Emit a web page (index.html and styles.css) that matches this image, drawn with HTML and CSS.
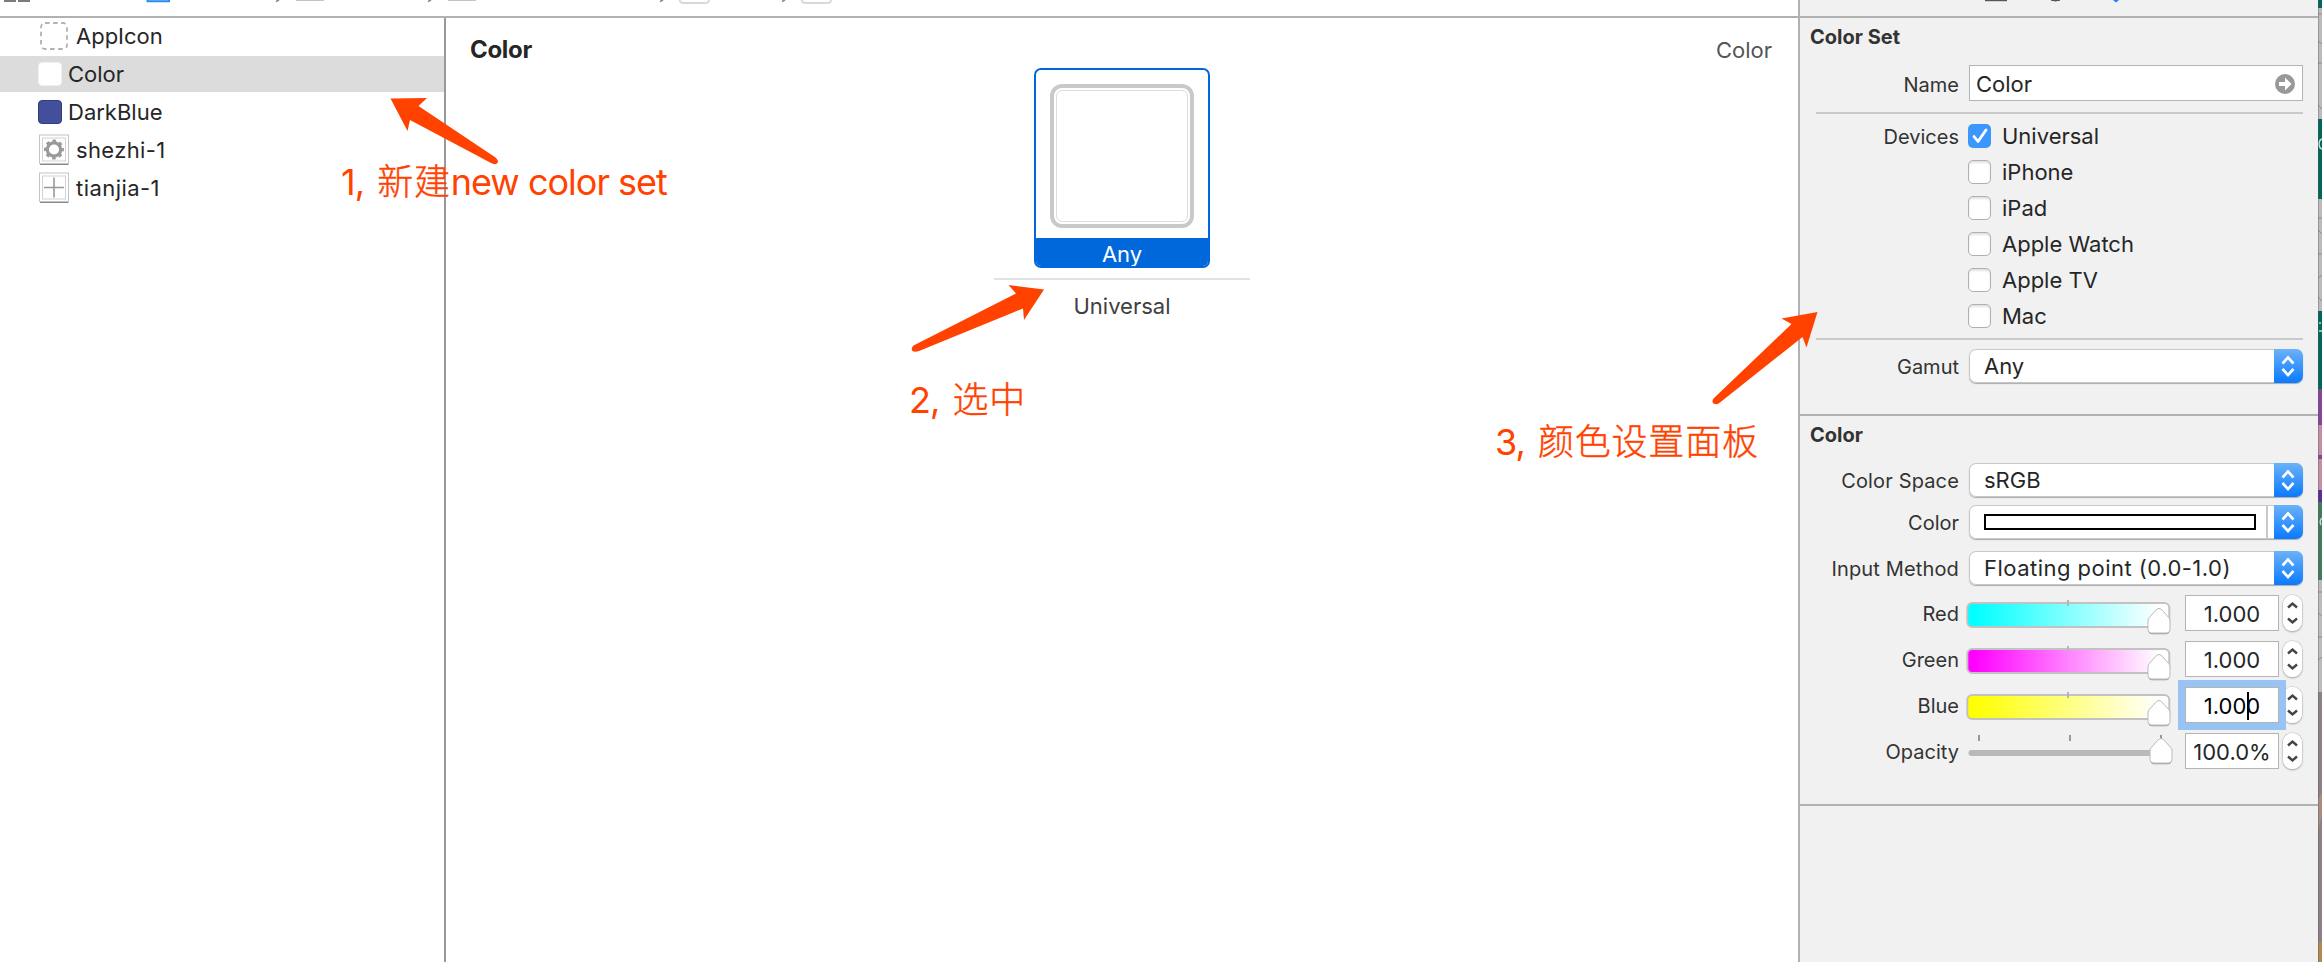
FILE: index.html
```
<!DOCTYPE html>
<html lang="en">
<head>
<meta charset="utf-8">
<title>Color Set</title>
<link rel="stylesheet" href="styles.css">
</head>
<body>
<svg class="defs" width="0" height="0">
  <defs>
    <linearGradient id="cyan"><stop offset="0.03" stop-color="#0ff"/><stop offset="0.95" stop-color="#fff"/></linearGradient>
    <linearGradient id="magenta"><stop offset="0.03" stop-color="#f0f"/><stop offset="0.95" stop-color="#fff"/></linearGradient>
    <linearGradient id="yellow"><stop offset="0.03" stop-color="#ff0"/><stop offset="0.95" stop-color="#fff"/></linearGradient>
    <symbol id="knob" viewBox="0 0 26 29"><path d="M2 14Q2 12 3.3 10.500L10.500 2.500Q13 0.200 15.500 2.500L22.700 10.500Q24 12 24 14V22.500Q24 26 20.500 26H5.500Q2 26 2 22.500Z" fill="#fff" stroke="#b9b9b9" stroke-width="1"/><path d="M3 25.500Q4 26.800 6 26.800H20Q22 26.800 23 25.500" fill="none" stroke="#a2a2a2"/></symbol>
    <symbol id="updown" viewBox="0 0 28 34"><path d="M8.500 14.500L14 8.500L19.500 14.500M8.500 20L14 26L19.500 20" fill="none" stroke="#fff" stroke-width="2.600"/></symbol>
    <symbol id="step" viewBox="0 0 20 36"><path d="M5 12.500L9.500 8.500L14 12.500M5 23.500L9.500 27.500L14 23.500" fill="none" stroke="#444" stroke-width="2.400"/></symbol>
  </defs>
</svg>
<div class="window">
  <div class="left">
    <div class="jumpbar">
      <svg width="1798" height="16" viewBox="0 0 1798 16">
        <path d="M4 0H16V2H4ZM18 0H30V2H18Z" fill="#7d7d7d"/>
        <path d="M147.500 -3V1.200H169V-3" fill="#d9ecfd" stroke="#2a8cf0" stroke-width="2"/>
        <path d="M276 1.500L279 0M428 1.500L431 0M660 1.500L663 0M782 1.500L785 0" stroke="#888" stroke-width="1.500"/>
        <path d="M296 0H324M448 0H476" stroke="#c4c4c4" stroke-width="2"/>
        <path d="M679.500 0Q680 3 684 3H705Q709 3 709 0M801.500 0Q802 3 806 3H827Q831 3 831 0" fill="none" stroke="#d8d8d8" stroke-width="1.800"/>
      </svg>
    </div>
    <div class="work">
      <ul class="assets">
        <li class="asset"><svg class="ic-img" width="32" height="32" viewBox="0 0 32 32"><rect x="3" y="3" width="26" height="26" rx="4" fill="none" stroke="#b2b2b2" stroke-width="1.800" stroke-dasharray="4.500 3.600"/></svg><span>AppIcon</span></li>
        <li class="asset picked"><i class="chip white"></i><span>Color</span></li>
        <li class="asset"><i class="chip blue"></i><span>DarkBlue</span></li>
        <li class="asset"><svg class="ic-img" width="32" height="32" viewBox="0 0 32 32"><rect x="2" y="2" width="28.500" height="29" fill="#8a8a8a"/><rect x="1.500" y="1" width="29" height="28.500" fill="#fff" stroke="#c4c4c4"/><rect x="4.500" y="4" width="23" height="23" fill="none" stroke="#d2d2d2"/><circle cx="16" cy="15.500" r="6.700" fill="none" stroke="#999" stroke-width="3.200"/><circle cx="16" cy="15.500" r="8.700" fill="none" stroke="#999" stroke-width="2.500" stroke-dasharray="3.500 3.333" stroke-dashoffset="1.750"/></svg><span class="t-she">shezhi-1</span></li>
        <li class="asset"><svg class="ic-img" width="32" height="32" viewBox="0 0 32 32"><rect x="2" y="2" width="28.500" height="29" fill="#8a8a8a"/><rect x="1.500" y="1" width="29" height="28.500" fill="#fff" stroke="#c4c4c4"/><rect x="4.500" y="4" width="23" height="23" fill="none" stroke="#d2d2d2"/><path d="M6 15.500H26M16 5.500V25.500" stroke="#999" stroke-width="1.600"/></svg><span class="t-tian">tianjia-1</span></li>
      </ul>
      <main class="editor">
        <header class="editor-head"><b>Color</b><span>Color</span></header>
        <div class="well">
          <div class="tile"><div class="swatch"><div class="inner"></div></div><div class="tile-name">Any</div></div>
          <div class="device">Universal</div>
        </div>
      </main>
    </div>
  </div>
  <aside class="inspector">
    <div class="tabs">
      <svg width="518" height="16" viewBox="0 0 518 16"><path d="M185 0H207" stroke="#555" stroke-width="2.400"/><path d="M251 0Q255.500 2 260 0Z" fill="#555" stroke="#555"/><path d="M313 0H319L316 2.500Z" fill="#1a84ff"/></svg>
    </div>
    <section class="sec first">
      <h2>Color Set</h2>
      <div class="row name"><label>Name</label><div class="field wide"><span>Color</span><svg width="20" height="20" viewBox="0 0 20 20"><circle cx="10" cy="10" r="10" fill="#999"/><path d="M4 8H10V3.500L16.500 10L10 16.500V12H4Z" fill="#fff"/></svg></div></div>
      <hr>
      <div class="row devices">
        <label>Devices</label>
        <div class="checks">
          <div class="check"><i class="box on"><svg width="24" height="24" viewBox="0 0 24 24"><path d="M6 12.500L10 17.500L18 6" fill="none" stroke="#fff" stroke-width="2.800" stroke-linecap="round" stroke-linejoin="round"/></svg></i><span>Universal</span></div>
          <div class="check"><i class="box"></i><span>iPhone</span></div>
          <div class="check"><i class="box"></i><span>iPad</span></div>
          <div class="check"><i class="box"></i><span>Apple Watch</span></div>
          <div class="check"><i class="box"></i><span>Apple TV</span></div>
          <div class="check"><i class="box"></i><span>Mac</span></div>
        </div>
      </div>
      <hr class="second">
      <div class="row gamut"><label>Gamut</label><div class="select"><span>Any</span><i class="cap"><svg width="28" height="34"><use href="#updown"/></svg></i></div></div>
    </section>
    <section class="sec colors">
      <h2>Color</h2>
      <div class="row space"><label class="spread">Color Space</label><div class="select"><span>sRGB</span><i class="cap"><svg width="28" height="34"><use href="#updown"/></svg></i></div></div>
      <div class="row pick"><label>Color</label><div class="select"><i class="bar"></i><i class="split"></i><i class="cap"><svg width="28" height="34"><use href="#updown"/></svg></i></div></div>
      <div class="row method"><label class="spread">Input Method</label><div class="select"><span class="v-float">Floating point (0.0-1.0)</span><i class="cap"><svg width="28" height="34"><use href="#updown"/></svg></i></div></div>
      <div class="row slide"><label>Red</label>
        <svg class="slider" width="212" height="46" viewBox="0 0 212 46"><rect x="1.300" y="13" width="202" height="24" rx="5" fill="url(#cyan)" stroke="#c2c2c2" stroke-width="2"/><path d="M102 10V16" stroke="#b5b5b5" stroke-width="2"/><use href="#knob" x="180" y="17" width="26" height="29"/></svg>
        <div class="field num">1.000</div><i class="stepper"><svg width="20" height="36"><use href="#step"/></svg></i></div>
      <div class="row slide"><label>Green</label>
        <svg class="slider" width="212" height="46" viewBox="0 0 212 46"><rect x="1.300" y="13" width="202" height="24" rx="5" fill="url(#magenta)" stroke="#c2c2c2" stroke-width="2"/><path d="M102 10V16" stroke="#b5b5b5" stroke-width="2"/><use href="#knob" x="180" y="17" width="26" height="29"/></svg>
        <div class="field num">1.000</div><i class="stepper"><svg width="20" height="36"><use href="#step"/></svg></i></div>
      <div class="row slide"><label>Blue</label>
        <svg class="slider" width="212" height="46" viewBox="0 0 212 46"><rect x="1.300" y="13" width="202" height="24" rx="5" fill="url(#yellow)" stroke="#c2c2c2" stroke-width="2"/><path d="M102 10V16" stroke="#b5b5b5" stroke-width="2"/><use href="#knob" x="180" y="17" width="26" height="29"/></svg>
        <div class="field num focus">1.000<i class="caret"></i></div><i class="stepper"><svg width="20" height="36"><use href="#step"/></svg></i></div>
      <div class="row slide"><label>Opacity</label>
        <svg class="slider" width="212" height="46" viewBox="0 0 212 46"><path d="M5.500 25H196" stroke="#b9b9b9" stroke-width="6" stroke-linecap="round"/><path d="M13 7V13M104 7V13M195 7V13" stroke="#999" stroke-width="2"/><use href="#knob" x="182" y="9" width="26" height="29"/></svg>
        <div class="field num pct">100.0%</div><i class="stepper"><svg width="20" height="36"><use href="#step"/></svg></i></div>
    </section>
  </aside>
  <svg class="desktop" width="4" height="962" viewBox="0 0 4 962">
    <rect width="4" height="962" fill="#bdbbba"/>
    <path d="M0 0H4V8H0ZM0 119H4V199H0ZM0 311H4V389H0Z" fill="#04665a"/>
    <path d="M0 389H4V502H0Z" fill="#87459a"/><path d="M0 425H4V455H0ZM0 459H4V490H0Z" fill="#c48ea6"/>
    <path d="M0 490H4V502H0Z" fill="#593091"/><path d="M0 502H4V580H0Z" fill="#437a5d"/>
    <path d="M0 692H4V942H0Z" fill="#8b8084"/><path d="M0 800L4 792V816L0 830Z" fill="#a98d7d"/><path d="M0 942H4V962H0Z" fill="#b28655"/>
    <path d="M0 14H4M0 41L4 44M0 63H4M0 105L4 109M0 218H4M0 230L4 234M0 254H4M0 278L4 275M0 297L4 301M0 592H4M0 613L4 616M0 637H4M0 660L4 657" stroke="#8f8d8c"/>
    <path d="M4 139Q1 140 1 144Q1 148 4 149M2 322V324M1 331H4M4 518Q1 520 3 525" fill="none" stroke="#c9dcd4" stroke-width="1.500"/>
    <path d="M0.500 0V962" stroke="#555" stroke-opacity="0.350"/>
  </svg>
</div>
<svg class="arrows" width="2322" height="962" viewBox="0 0 2322 962" fill="#ff4200">
  <path d="M390.500 98.500L427 98L418.500 106L495.500 157.500Q499.500 161 497 163.500Q495 165 491 163L410 120L407.500 131Z"/>
  <path d="M1044 289.500L1008.500 285L1016 293.500L913.500 345.500Q910.500 348.500 912.500 351Q915 352.500 919 351L1023 308.500L1024 320Z"/>
  <path d="M1817.500 312L1781.500 318.500L1791.500 324L1713.500 398.500Q1711.500 401.500 1713.500 403.500Q1717 405.500 1720 402.500L1802.500 337L1806.500 347.500Z"/>
</svg>
<div class="note n1">1, <span class="han">新建</span>new color set</div>
<div class="note n2">2, <span class="han">选中</span></div>
<div class="note n3">3, <span class="han">颜色设置面板</span></div>
</body>
</html>
```
FILE: styles.css
```
* { box-sizing: border-box; }
body {
  margin: 0;
  width: 2322px;
  height: 962px;
  overflow: hidden;
  position: relative;
  background: #fff;
  font-family: Inter, "Liberation Sans", sans-serif;
  font-size: 22px;
  line-height: 28px;
  color: #262626;
}
.defs { position: absolute; }
svg { display: block; flex: none; }
i { font-style: normal; display: block; flex: none; }
span, label, h2, b { white-space: nowrap; }
.window { display: flex; height: 962px; }

.left { width: 1798px; display: flex; flex-direction: column; }
.jumpbar, .tabs { height: 18px; border-bottom: 2px solid #b1b1b1; flex: none; }
.work { flex: 1; display: flex; }

.assets {
  margin: 0;
  padding: 0;
  list-style: none;
  width: 446px;
  border-right: 2px solid #999;
}
.asset { height: 38px; padding: 0 0 2px 38px; display: flex; align-items: center; }
.asset .ic-img { margin-right: 6px; }
.t-she { letter-spacing: 0.35px; }
.t-tian { letter-spacing: 0.45px; }
.picked { background: linear-gradient(#dcdcdc 36px, #fff 36px); }
.chip { width: 24px; height: 24px; border-radius: 4px; margin-right: 6px; }
.chip.white { background: #fff; border: 1px solid #f0f0f0; }
.chip.blue { background: #424f9b; border: 1px solid #2f3c84; }

.editor { flex: 1; }
.editor-head {
  display: flex;
  justify-content: space-between;
  padding: 17px 26px 0 24px;
  height: 50px;
}
.editor-head b { font-size: 24px; letter-spacing: -0.3px; line-height: 30px; }
.editor-head span { color: #555; line-height: 30px; }
.well { width: 256px; margin-left: 548px; }
.tile {
  width: 176px;
  height: 200px;
  margin: 0 auto 10px;
  border: 2px solid #0068da;
  border-radius: 7px;
  background: #fff;
  display: flex;
  flex-direction: column;
  align-items: center;
  overflow: hidden;
}
.swatch {
  width: 144px;
  height: 144px;
  margin: 14px 0 10px;
  padding: 2px;
  border: 4px solid #c9c9c9;
  border-radius: 12px;
}
.inner { height: 132px; border: 1px solid #dedede; border-radius: 6px; }
.tile-name {
  width: 100%;
  height: 30px;
  background: #0068da;
  color: #fff;
  text-align: center;
  line-height: 33px;
}
.device {
  border-top: 2px solid #e2e2e2;
  padding-top: 12px;
  text-align: center;
  color: #404040;
}

.inspector {
  width: 520px;
  background: #f1f1f1;
  border-left: 2px solid #b1b1b1;
}
.sec { border-bottom: 2px solid #b1b1b1; }
.first { height: 398px; }
.colors { height: 390px; }
h2 { margin: 0; padding: 5px 0 0 10px; font-size: 20px; line-height: 28px; color: #333; }
.row { display: flex; align-items: center; }
label { width: 159px; margin-right: 10px; padding-top: 1px; text-align: right; font-size: 20px; color: #333; }
.spread { letter-spacing: 0.15px; }
.name { margin-top: 14px; }
.name label { padding-top: 3px; }
.field { height: 36px; background: #fff; border: 1px solid #b4b4b4; display: flex; align-items: center; }
.wide { width: 334px; justify-content: space-between; padding: 2px 7px 0 6px; }
hr { margin: 11px 16px 0; border: 0; border-top: 2px solid #c9c9c9; width: 487px; }
.devices { align-items: flex-start; margin-top: 10px; }
.devices label { line-height: 24px; margin-right: 9px; }
.checks { display: flex; flex-direction: column; gap: 12px; }
.check { display: flex; align-items: center; height: 24px; gap: 11px; }
.box {
  width: 23px;
  height: 24px;
  border-radius: 5px;
  background: #fff;
  border: 1px solid #b0b0b0;
  box-shadow: inset 0 2px 2px #e2e2e2;
}
.box.on { background: #3b97fb; border: 0; box-shadow: none; }
.second { margin-top: 10px; }
.gamut { margin-top: 9px; }
.select {
  width: 334px;
  height: 34px;
  background: #fff;
  border-radius: 7px;
  box-shadow: inset 0 0 0 1px #c8c8c8, 0 1px 1px #aaa;
  display: flex;
  align-items: center;
  padding-left: 15px;
  overflow: hidden;
}
.cap { margin-left: auto; width: 29px; height: 34px; background: linear-gradient(#6bb2f9, #0a7aff); }
.v-float { letter-spacing: 0.48px; }
.space { margin-top: 14px; }
.pick { margin-top: 8px; }
.method { margin: 12px 0 5px; }
.bar { width: 272px; height: 16px; border: 2px solid #000; }
.split { margin-left: 10px; width: 2px; height: 32px; background: #c8c8c8; }
.slide { height: 46px; }
.slide label { margin-right: 7px; padding-top: 2px; }
.num { width: 94px; margin-left: 7px; justify-content: center; position: relative; padding-top: 2px; margin-top: -1px; }
.focus { color: #000; box-shadow: 0 0 0 7px #97c4f5; }
.caret { position: absolute; left: 61px; top: 4px; width: 2px; height: 28px; background: #000; }
.stepper { width: 19px; height: 36px; margin-left: 4px; margin-top: -1px; border-radius: 9px; background: #fff; box-shadow: 0 0 0 0.500px #c4c4c4, 0 1px 2px #999; }
.focus + .stepper { background: linear-gradient(90deg, #dcecfc 3px, #fff 3px); }

.arrows { position: absolute; left: 0; top: 0; }
.note { position: absolute; color: #ff4200; font-size: 36px; line-height: 44px; white-space: nowrap; letter-spacing: -1px; }
.han { font-family: "Noto Sans CJK SC", sans-serif; letter-spacing: 0.800px; font-weight: 300; line-height: 1; margin-left: 4px; -webkit-text-stroke: 0.4px #ff4200; }
.n1 { left: 341px; top: 160px; }
.n2 { left: 909px; top: 378px; }
.n3 { left: 1495px; top: 420px; }
```
